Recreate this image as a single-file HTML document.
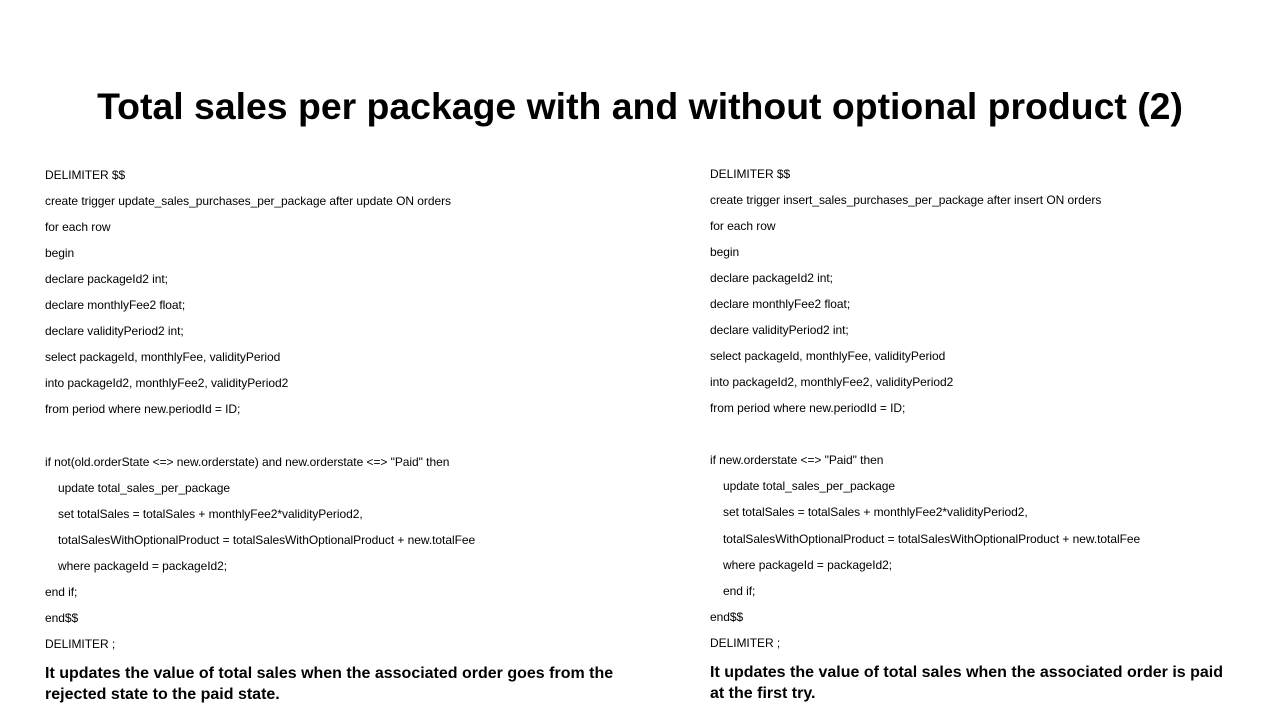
<!DOCTYPE html>
<html><head><meta charset="utf-8"><style>
body{margin:0;width:1280px;height:720px;background:#fff;position:relative;overflow:hidden;font-family:"Liberation Sans",sans-serif;color:#000}
h1{position:absolute;top:83px;left:0;width:1280px;text-align:center;margin:0;font-size:37.4px;font-weight:bold;line-height:46px}
.l{position:absolute;font-size:12px;line-height:14px;white-space:pre;letter-spacing:-0.05px}
.b{position:absolute;font-size:16px;font-weight:bold;line-height:21px;width:600px}
</style></head><body>
<h1>Total sales per package with and without optional product (2)</h1>
<div class="l" style="left:45px;top:168px">DELIMITER $$</div>
<div class="l" style="left:45px;top:194px">create trigger update_sales_purchases_per_package after update ON orders</div>
<div class="l" style="left:45px;top:220px">for each row</div>
<div class="l" style="left:45px;top:246px">begin</div>
<div class="l" style="left:45px;top:272px">declare packageId2 int;</div>
<div class="l" style="left:45px;top:298px">declare monthlyFee2 float;</div>
<div class="l" style="left:45px;top:324px">declare validityPeriod2 int;</div>
<div class="l" style="left:45px;top:350px">select packageId, monthlyFee, validityPeriod</div>
<div class="l" style="left:45px;top:376px">into packageId2, monthlyFee2, validityPeriod2</div>
<div class="l" style="left:45px;top:402px">from period where new.periodId = ID;</div>
<div class="l" style="left:45px;top:455px">if not(old.orderState &lt;=&gt; new.orderstate) and new.orderstate &lt;=&gt; "Paid" then</div>
<div class="l" style="left:58px;top:481px">update total_sales_per_package</div>
<div class="l" style="left:58px;top:507px">set totalSales = totalSales + monthlyFee2*validityPeriod2,</div>
<div class="l" style="left:58px;top:533px">totalSalesWithOptionalProduct = totalSalesWithOptionalProduct + new.totalFee</div>
<div class="l" style="left:58px;top:559px">where packageId = packageId2;</div>
<div class="l" style="left:45px;top:585px">end if;</div>
<div class="l" style="left:45px;top:611px">end$$</div>
<div class="l" style="left:45px;top:637px">DELIMITER ;</div>
<div class="b" style="left:45px;top:663px">It updates the value of total sales when the associated order goes from the rejected state to the paid state.</div>

<div class="l" style="left:710px;top:167px">DELIMITER $$</div>
<div class="l" style="left:710px;top:193px">create trigger insert_sales_purchases_per_package after insert ON orders</div>
<div class="l" style="left:710px;top:219px">for each row</div>
<div class="l" style="left:710px;top:245px">begin</div>
<div class="l" style="left:710px;top:271px">declare packageId2 int;</div>
<div class="l" style="left:710px;top:297px">declare monthlyFee2 float;</div>
<div class="l" style="left:710px;top:323px">declare validityPeriod2 int;</div>
<div class="l" style="left:710px;top:349px">select packageId, monthlyFee, validityPeriod</div>
<div class="l" style="left:710px;top:375px">into packageId2, monthlyFee2, validityPeriod2</div>
<div class="l" style="left:710px;top:401px">from period where new.periodId = ID;</div>
<div class="l" style="left:710px;top:453px">if new.orderstate &lt;=&gt; "Paid" then</div>
<div class="l" style="left:723px;top:479px">update total_sales_per_package</div>
<div class="l" style="left:723px;top:505px">set totalSales = totalSales + monthlyFee2*validityPeriod2,</div>
<div class="l" style="left:723px;top:532px">totalSalesWithOptionalProduct = totalSalesWithOptionalProduct + new.totalFee</div>
<div class="l" style="left:723px;top:558px">where packageId = packageId2;</div>
<div class="l" style="left:723px;top:584px">end if;</div>
<div class="l" style="left:710px;top:610px">end$$</div>
<div class="l" style="left:710px;top:636px">DELIMITER ;</div>
<div class="b" style="left:710px;top:662px;width:520px">It updates the value of total sales when the associated order is paid at the first try.</div>
</body></html>
